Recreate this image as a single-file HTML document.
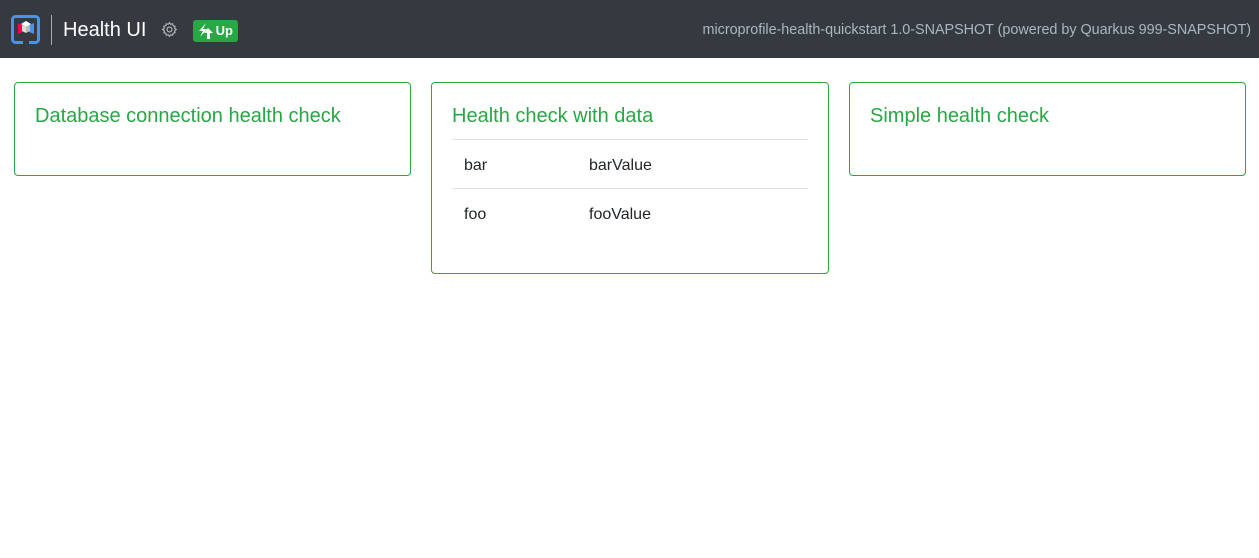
<!DOCTYPE html>
<html><head><style>
body{margin:0;font-family:"Liberation Sans",sans-serif;background:#fff;width:1259px;height:558px;overflow:hidden}
.nav{height:58px;background:#343a40;position:relative}
.card{position:absolute;border:1px solid #28a745;border-radius:4px;background:#fff;box-sizing:border-box}
.card h5{margin:0;position:absolute;left:20px;top:22px;font-size:20px;font-weight:normal;color:#28a745}
.row{position:absolute;left:20px;width:356px;border-top:1px solid #dee2e6;height:48px;font-size:16px;color:#212529}
.row span{position:absolute;top:17px}
</style></head><body>
<div class="nav">
<svg style="position:absolute;left:11px;top:15px" width="30" height="30" viewBox="0 0 30 30">
<rect x="1.5" y="1.5" width="26" height="26" rx="3" fill="none" stroke="#4695eb" stroke-width="3"/>
<rect x="12" y="24" width="6" height="6" fill="#343a40"/>
<polygon points="7,8 14,11 14,16 7,19" fill="#ff004a"/>
<polygon points="23,8 16,11 16,16 23,19" fill="#4695eb"/>
<polygon points="10,9 15,6 20,9 15,12" fill="#fff"/>
<polygon points="11,10 15,12 15,18 11,16" fill="#ddd"/>
<polygon points="19,10 15,12 15,18 19,16" fill="#bbb"/>
</svg>
<div style="position:absolute;left:51px;top:15px;width:1px;height:30px;background:#aaa"></div>
<div style="position:absolute;left:63px;top:19px;font-size:20px;color:#fff">Health UI</div>
<svg style="position:absolute;left:161px;top:21px" width="17" height="17" viewBox="0 0 16 16"><circle cx="8" cy="8" r="2.3" fill="none" stroke="#bbb" stroke-width="1.1"/><path d="M8 1.5l1.1 1.6 1.9-.5.4 1.9 1.9.5-.5 1.9 1.6 1.1-1.6 1.1.5 1.9-1.9.5-.4 1.9-1.9-.5L8 14.5l-1.1-1.6-1.9.5-.4-1.9-1.9-.5.5-1.9L1.5 8l1.6-1.1-.5-1.9 1.9-.5.4-1.9 1.9.5z" fill="none" stroke="#bbb" stroke-width="1"/></svg>
<div style="position:absolute;left:193px;top:20px;width:45px;height:22px;background:#28a745;border-radius:3px;color:#fff;font-size:13px;font-weight:bold;line-height:22px;text-align:right;padding-right:5px;box-sizing:border-box">Up</div>
<svg style="position:absolute;left:197px;top:22px" width="17" height="18" viewBox="0 0 17 18"><path d="M9 1L2 9h4l-3 6 7-8H6z" fill="#fff"/><path d="M11 6l5 5h-3v6h-3v-6H7z" fill="#fff"/></svg>
<div style="position:absolute;right:8px;top:22px;font-size:14.4px;color:#adb5bd;letter-spacing:-0.03px">microprofile-health-quickstart 1.0-SNAPSHOT (powered by Quarkus 999-SNAPSHOT)</div>
</div>
<div class="card" style="left:14px;top:82px;width:397px;height:94px"><h5>Database connection health check</h5></div>
<div class="card" style="left:431px;top:82px;width:398px;height:192px"><h5>Health check with data</h5>
<div class="row" style="top:56px"><span style="left:12px">bar</span><span style="left:137px">barValue</span></div>
<div class="row" style="top:105px"><span style="left:12px">foo</span><span style="left:137px">fooValue</span></div>
</div>
<div class="card" style="left:849px;top:82px;width:397px;height:94px"><h5>Simple health check</h5></div>
</body></html>
